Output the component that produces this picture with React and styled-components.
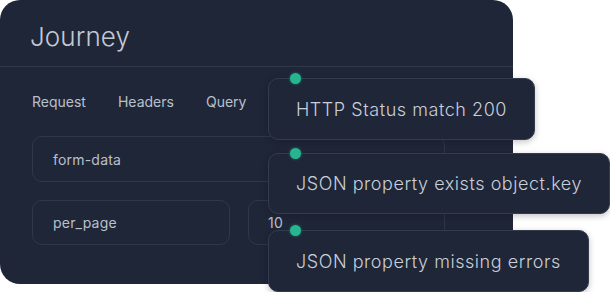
import React from "react";
import styled, { createGlobalStyle } from "styled-components";

const Global = createGlobalStyle`
  html, body { margin: 0; padding: 0; background: #ffffff; }
  body { font-family: Inter, "Noto Sans", sans-serif; }
`;

const Stage = styled.div`
  position: relative;
  width: 610px;
  height: 292px;
  overflow: hidden;
`;

const Card = styled.div`
  width: 513px;
  height: 284px;
  box-sizing: border-box;
  background: #1f2638;
  border-radius: 20px;
  display: flex;
  flex-direction: column;
`;

const Header = styled.div`
  height: 67px;
  box-sizing: border-box;
  border-bottom: 1px solid #30384a;
  display: flex;
  align-items: center;
  padding: 7px 0 0 30px;
  font-size: 26px;
  font-weight: 300;
  color: #c3c9d4;
  letter-spacing: 0.1px;
`;

const Tabs = styled.div`
  display: flex;
  gap: 32px;
  padding: 0 32px;
  height: 69px;
  align-items: center;
  font-size: 14px;
  color: #b9c0cc;
`;

const Fields = styled.div`
  display: flex;
  flex-direction: column;
  gap: 18px;
  padding: 0 0 0 32px;
`;

const Row = styled.div`
  display: flex;
  gap: 18px;
  width: 413px;
`;

const Field = styled.div`
  box-sizing: border-box;
  height: ${(p) => p.h}px;
  width: ${(p) => p.w}px;
  border: 1px solid #2f3749;
  border-radius: 10px;
  display: flex;
  align-items: center;
  padding-left: ${(p) => p.pad}px;
  font-size: 14px;
  color: #b9c0cc;
  letter-spacing: 0.2px;
`;

const Checks = styled.div`
  position: absolute;
  left: 268px;
  top: 78px;
  display: flex;
  flex-direction: column;
  align-items: flex-start;
`;

const Check = styled.div`
  position: relative;
  box-sizing: border-box;
  height: ${(p) => p.h}px;
  margin-top: ${(p) => p.mt}px;
  padding: 0 27px;
  display: flex;
  align-items: center;
  background: #1f2638;
  border: 1px solid #333b4d;
  border-radius: 10px;
  font-size: 18px;
  font-weight: 300;
  letter-spacing: 0.55px;
  color: #c9cfda;
  white-space: nowrap;
  box-shadow: 0 2px 6px rgba(10, 14, 24, 0.25);
`;

const Dot = styled.span`
  position: absolute;
  left: 21px;
  top: -6px;
  width: 11px;
  height: 11px;
  border-radius: 50%;
  background: #27b58f;
  box-shadow: 0 0 3px rgba(39, 181, 143, 0.6);
`;

const checks = [
  { text: "HTTP Status match 200", h: 62, mt: 0 },
  { text: "JSON property exists object.key", h: 61, mt: 13 },
  { text: "JSON property missing errors", h: 62, mt: 16 },
];

export default function App() {
  return (
    <>
      <Global />
      <Stage>
        <Card>
          <Header>Journey</Header>
          <Tabs>
            <span>Request</span>
            <span>Headers</span>
            <span>Query</span>
          </Tabs>
          <Fields>
            <Field w={413} h={46} pad={20}>form-data</Field>
            <Row>
              <Field w={198} h={45} pad={20}>per_page</Field>
              <Field w={197} h={45} pad={19}>10</Field>
            </Row>
          </Fields>
        </Card>
        <Checks>
          {checks.map((c) => (
            <Check key={c.text} h={c.h} mt={c.mt}>
              <Dot />
              {c.text}
            </Check>
          ))}
        </Checks>
      </Stage>
    </>
  );
}
